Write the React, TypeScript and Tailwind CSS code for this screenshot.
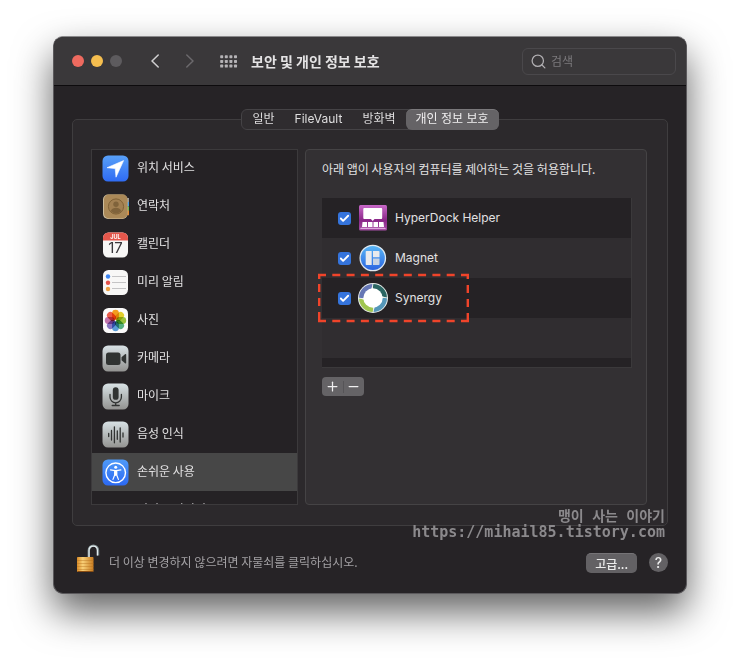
import type { ReactNode } from "react";
import { Check, Minus, Plus, Search } from "lucide-react";

const TABS = ["일반", "FileVault", "방화벽", "개인 정보 보호"];

const PETALS = [
  { angle: 0, color: "#f7a01f" },
  { angle: 45, color: "#e6d22c" },
  { angle: 90, color: "#9dc63f" },
  { angle: 135, color: "#57b384" },
  { angle: 180, color: "#5b9fdc" },
  { angle: 225, color: "#8a78c4" },
  { angle: 270, color: "#c476b0" },
  { angle: 315, color: "#ee5f4c" },
];

const GRID_DOTS = [0, 1, 2].flatMap((row) =>
  [0, 1, 2, 3].map((col) => ({ x: col * 4.6 + 0.2, y: row * 4.7 + 0.2 })),
);

function Tile({ from, to, children }: { from: string; to: string; children: ReactNode }) {
  const id = `tile-${from.slice(1)}-${to.slice(1)}`;

  return (
    <svg viewBox="0 0 27 27" className="size-[27px] shrink-0" aria-hidden="true">
      <defs>
        <linearGradient id={id} x1="0" y1="0" x2="0" y2="1">
          <stop offset="0" stopColor={from} />
          <stop offset="1" stopColor={to} />
        </linearGradient>
      </defs>
      <rect x="0.5" y="0.5" width="26" height="26" rx="5.5" fill={`url(#${id})`} />
      {children}
    </svg>
  );
}

function LocationIcon() {
  return (
    <Tile from="#58a0f8" to="#2f6bf3">
      <path d="M21.6 5.6 5 12.7l8.2.9.8 8.6z" fill="#fff" stroke="#fff" strokeWidth="0.6" strokeLinejoin="round" />
    </Tile>
  );
}

function ContactsIcon() {
  return (
    <svg viewBox="0 0 27 27" className="size-[27px] shrink-0" aria-hidden="true">
      <rect x="23" y="5" width="4.6" height="4.6" rx="1" fill="#9b9b9b" />
      <rect x="23" y="9" width="4.6" height="4.6" rx="1" fill="#4c9fe0" />
      <rect x="23" y="13.4" width="4.6" height="4.6" rx="1" fill="#6fbb52" />
      <rect x="23" y="17.6" width="4.6" height="4.6" rx="1" fill="#e58a35" />
      <rect x="1" y="1.5" width="24.5" height="24.5" rx="5" fill="#cdbd9d" />
      <rect x="2" y="1.5" width="23.5" height="24" rx="5" fill="#ab8958" />
      <circle cx="14" cy="13.5" r="7.6" fill="#a28052" stroke="#806237" strokeWidth="1" />
      <circle cx="14" cy="11.2" r="2.7" fill="#80633b" />
      <path d="M8.8 18c.8-2.5 3-3.3 5.2-3.3s4.4.8 5.2 3.3c-2.8 3.2-7.6 3.2-10.4 0z" fill="#80633b" />
    </svg>
  );
}

function CalendarIcon() {
  return (
    <svg viewBox="0 0 27 27" className="size-[27px] shrink-0" aria-hidden="true">
      <rect x="1" y="1.5" width="25" height="25" rx="5.5" fill="#f7f6f5" />
      <path d="M1 9.5V7A5.500 5.500 0 0 1 6.500 1.500h14A5.500 5.500 0 0 1 26 7v2.500z" fill="#e5574c" />
      <text x="13.5" y="7.8" textAnchor="middle" fontSize="5.5" fontWeight="700" fill="#fff" fontFamily="Inter, sans-serif">
        JUL
      </text>
      <text x="13.5" y="22.3" textAnchor="middle" fontSize="15" fill="#38363a" fontFamily="Inter, sans-serif">
        17
      </text>
    </svg>
  );
}

function RemindersIcon() {
  return (
    <svg viewBox="0 0 27 27" className="size-[27px] shrink-0" aria-hidden="true">
      <rect x="1" y="1" width="25" height="25" rx="5.5" fill="#f8f7f6" />
      <circle cx="6" cy="7.5" r="2.2" fill="#3c83ef" />
      <circle cx="6" cy="13.8" r="2.2" fill="#e4524a" />
      <circle cx="6" cy="20" r="2.2" fill="#eda043" />
      <path d="M10 7.5h14M10 13.5h14M10 19.5h14" stroke="#c5c4c5" strokeWidth="1" />
    </svg>
  );
}

function PhotosIcon() {
  return (
    <svg viewBox="0 0 27 27" className="size-[27px] shrink-0" aria-hidden="true">
      <rect x="1" y="1" width="25" height="25" rx="5.5" fill="#fbfafa" />
      {PETALS.map((petal) => (
        <rect
          key={petal.angle}
          x="10.1"
          y="2.8"
          width="6.8"
          height="10"
          rx="3.4"
          fill={petal.color}
          className="mix-blend-multiply"
          transform={`rotate(${petal.angle} 13.5 13.5)`}
        />
      ))}
    </svg>
  );
}

function CameraIcon() {
  return (
    <Tile from="#d9e2e6" to="#929290">
      <rect x="4" y="7.5" width="14.5" height="12.5" rx="2.5" fill="#303332" />
      <path d="M19.500 12.300 23 9.200c.6-.5 1.200-.2 1.200.5v8.100c0 .7-.6 1-1.200.5l-3.500-3.100z" fill="#303332" />
    </Tile>
  );
}

function MicIcon() {
  return (
    <Tile from="#d8e2e5" to="#939391">
      <rect x="10.8" y="4.2" width="5.800" height="12.6" rx="2.9" fill="#303332" />
      <path
        d="M8 11.500v2.600a5.700 5.700 0 0 0 11.400 0v-2.600M13.700 19.800v2.700M10.200 22.500h7"
        fill="none"
        stroke="#303332"
        strokeWidth="1.3"
        strokeLinecap="round"
      />
    </Tile>
  );
}

function SpeechIcon() {
  return (
    <Tile from="#d7e1e4" to="#949492">
      <path
        d="M6.700 12.500v3M9.500 9.500v9.500M12.400 5.800v16M15.300 9.800v8.500M18.200 7v14M21 12v4"
        stroke="#303332"
        strokeWidth="1.3"
        strokeLinecap="round"
      />
    </Tile>
  );
}

function AccessibilityIcon() {
  return (
    <Tile from="#4f9af8" to="#2c69f3">
      <circle cx="13.7" cy="13.8" r="9.8" fill="none" stroke="#fff" strokeWidth="1.4" />
      <circle cx="13.7" cy="8.3" r="1.5" fill="#fff" />
      <path
        d="M8.500 10.900c2.500.6 3.800.8 5.200.8s2.700-.2 5.200-.8M12.700 12v4l-1.700 4.400M14.700 12v4l1.700 4.400"
        fill="none"
        stroke="#fff"
        strokeWidth="1.2"
        strokeLinecap="round"
      />
      <path d="M12.300 11.500h2.800v4.500l-1.400 1-1.400-1z" fill="#fff" />
    </Tile>
  );
}

function HyperDockIcon() {
  return (
    <svg viewBox="0 0 30 30" className="size-[30px] shrink-0" aria-hidden="true">
      <defs>
        <linearGradient id="hyperdock" x1="0" y1="0" x2="0" y2="1">
          <stop offset="0" stopColor="#c869c8" />
          <stop offset="0.6" stopColor="#8a2688" />
          <stop offset="1" stopColor="#a74fa6" />
        </linearGradient>
      </defs>
      <rect x="1" y="2" width="28" height="25.5" rx="1.5" fill="url(#hyperdock)" />
      <path d="M6.500 5h16.500c.8 0 1.200.5 1.200 1.200v8.600c0 .8-.4 1.200-1.200 1.200h-6.500l-1.800 2-1.800-2H6.500c-.8 0-1.200-.4-1.200-1.200V6.200c0-.7.4-1.200 1.200-1.200z" fill="#fff" />
      <path d="M4.500 19H9v5H4zM10 19h4.500v5H10zM15.500 19H20v5h-4.500zM21 19h4.500l.5 5h-5z" fill="#fff" />
      <path d="M2 26h26l-1-1.200H3z" fill="#dda9dc" />
    </svg>
  );
}

function MagnetIcon() {
  return (
    <svg viewBox="0 0 30 30" className="size-[30px] shrink-0" aria-hidden="true">
      <defs>
        <linearGradient id="magnet" x1="0" y1="0" x2="0" y2="1">
          <stop offset="0" stopColor="#5ab8f6" />
          <stop offset="1" stopColor="#2962e0" />
        </linearGradient>
      </defs>
      <circle cx="14.8" cy="15" r="12.7" fill="url(#magnet)" stroke="#dfe8ef" strokeWidth="1.3" />
      <path d="M8.500 8h5.200v14H8.500a.8.8 0 0 1-.8-.8V8.800a.8.8 0 0 1 .8-.8z" fill="#e8eaed" />
      <path d="M15 8h5.700a.8.8 0 0 1 .8.8V14.200H15z" fill="#e8eaed" />
      <path d="M15 15.500h6.500v5.700a.8.8 0 0 1-.8.8H15z" fill="#c7d3e3" />
    </svg>
  );
}

function SynergyIcon() {
  return (
    <svg viewBox="0 0 30 30" className="size-[30px] shrink-0" aria-hidden="true">
      <circle cx="15" cy="15" r="15" fill="#e9eeec" />
      <path d="M15 1a14 14 0 0 1 14 14l-4.500-1.500L15 15z" fill="#2b6663" />
      <path d="M29 15a14 14 0 0 1-14 14l1.500-4.500L15 15z" fill="#5597b9" />
      <path d="M15 29A14 14 0 0 1 1 15l4.500 1.500L15 15z" fill="#a0c651" />
      <path d="M1 15A14 14 0 0 1 15 1l-1.500 4.500L15 15z" fill="#6677b5" />
      <path d="M15 .5 14 6M29.500 15 24 14M15 29.500l1-5.500M.5 15 6 16" stroke="#e9eeec" strokeWidth="0.9" />
      <circle cx="15" cy="15" r="9.7" fill="#fff" />
    </svg>
  );
}

function LockIcon() {
  return (
    <svg viewBox="0 0 24 32" className="h-8 w-6 shrink-0" aria-hidden="true">
      <defs>
        <linearGradient id="lock" x1="0" y1="0" x2="1" y2="0">
          <stop offset="0" stopColor="#d98b27" />
          <stop offset="0.35" stopColor="#f8cf77" />
          <stop offset="1" stopColor="#c77b20" />
        </linearGradient>
      </defs>
      <path d="M12.800 15V7.500c0-6.500 9.200-6.500 9.200 0v5" fill="none" stroke="#7f8c8f" strokeWidth="2.4" />
      <path d="M13 15V7.500c0-5.800 8.400-5.800 8.400 0v5" fill="none" stroke="#e3ecee" strokeWidth="1.2" />
      <rect x="1" y="14" width="16.5" height="15" rx="0.8" fill="url(#lock)" />
      <path d="M1 17.500h16.500M1 20.500h16.500M1 23.500h16.500M1 26.500h16.500" stroke="#b46f1c" strokeOpacity="0.5" strokeWidth="0.8" />
      <path d="M1.500 28.500h15.500" stroke="#8a4d12" strokeWidth="1" />
    </svg>
  );
}

const CATEGORIES = [
  { label: "위치 서비스", icon: <LocationIcon /> },
  { label: "연락처", icon: <ContactsIcon /> },
  { label: "캘린더", icon: <CalendarIcon /> },
  { label: "미리 알림", icon: <RemindersIcon /> },
  { label: "사진", icon: <PhotosIcon /> },
  { label: "카메라", icon: <CameraIcon /> },
  { label: "마이크", icon: <MicIcon /> },
  { label: "음성 인식", icon: <SpeechIcon /> },
  { label: "손쉬운 사용", icon: <AccessibilityIcon />, selected: true },
  { label: "입력 모니터링", icon: null },
];

const APPS = [
  { name: "HyperDock Helper", icon: <HyperDockIcon /> },
  { name: "Magnet", icon: <MagnetIcon /> },
  { name: "Synergy", icon: <SynergyIcon /> },
];

function Toolbar() {
  return (
    <header className="flex h-[49px] items-center border-b border-[#0d0b0d] bg-[#3a383a] pr-[10px] pl-[18px]">
      <div className="flex gap-[7px]">
        <button aria-label="닫기" className="size-3 rounded-full bg-[#ee6a5f]" />
        <button aria-label="최소화" className="size-3 rounded-full bg-[#f5be4f]" />
        <button aria-label="확대/축소" disabled className="size-3 rounded-full bg-[#5d5b5e]" />
      </div>

      <nav className="ml-[21px] flex items-center gap-[11px]">
        <button aria-label="뒤로" className="flex w-6 justify-center text-[#d0cfd0]">
          <svg viewBox="0 0 8 14" className="h-[14px] w-2" fill="none" stroke="currentColor" strokeWidth="1.5" strokeLinecap="round" strokeLinejoin="round">
            <path d="M7.200 1 1 7l6.200 6" />
          </svg>
        </button>
        <button aria-label="앞으로" disabled className="flex w-6 justify-center text-[#6b696c]">
          <svg viewBox="0 0 8 14" className="h-[14px] w-2" fill="none" stroke="currentColor" strokeWidth="1.5" strokeLinecap="round" strokeLinejoin="round">
            <path d="M.8 1 7 7 .8 13" />
          </svg>
        </button>
      </nav>

      <button aria-label="모두 보기" className="ml-[18px]">
        <svg viewBox="0 0 18 13" className="h-[13px] w-[18px]">
          {GRID_DOTS.map((dot) => (
            <rect key={`${dot.x}-${dot.y}`} x={dot.x} y={dot.y} width="3" height="3" rx="0.7" fill="#b5b3b6" />
          ))}
        </svg>
      </button>

      <h1 className="mb-px ml-[13px] text-sm leading-5 font-bold text-[#e4e3e4]">보안 및 개인 정보 보호</h1>

      <label className="ml-auto flex h-[27px] w-[154px] items-center gap-1 rounded-md border border-[#4a484b] px-[7px]">
        <Search className="size-[17px] shrink-0 text-[#b0aeb1]" strokeWidth={1.8} aria-hidden="true" />
        <input
          type="search"
          aria-label="검색"
          placeholder="검색"
          className="w-full min-w-0 bg-transparent text-xs text-[#dddcdd] outline-none placeholder:text-[#7c7a7d]"
        />
      </label>
    </header>
  );
}

function Tabs() {
  return (
    <div
      role="tablist"
      className="relative z-10 mx-auto flex h-[21px] rounded-md border border-[#454346] bg-[#2f2c2f] font-[Inter,'Noto_Sans_CJK_KR',sans-serif]"
    >
      {TABS.map((tab, index) => {
        const selected = index === TABS.length - 1;

        return (
          <button
            key={tab}
            role="tab"
            aria-selected={selected}
            className={
              selected
                ? "-my-px -mr-px rounded-md border-t border-[#7a787b] bg-[#656366] px-[10px] pb-[2px] text-xs leading-4 text-[#f0eff0]"
                : "px-[10px] pb-[2px] text-xs leading-4 text-[#dfdedf]"
            }
          >
            {tab}
          </button>
        );
      })}
    </div>
  );
}

function Sidebar() {
  return (
    <ul className="h-[356px] w-[207px] shrink-0 overflow-hidden border-x border-b border-[#3c3a3c] bg-[#252225] shadow-[inset_0_1px_#3c3a3c]">
      {CATEGORIES.map((category) => (
        <li key={category.label}>
          <button
            aria-current={category.selected}
            className={
              category.selected
                ? "flex h-[38px] w-full items-center gap-2 bg-[#474747] pl-[10px] text-left"
                : "flex h-[38px] w-full items-center gap-2 pl-[10px] text-left"
            }
          >
            {category.icon ?? <span className="size-[27px] shrink-0" />}
            <span className="pb-[3px] text-xs text-[#e2e1e2]">{category.label}</span>
          </button>
        </li>
      ))}
    </ul>
  );
}

function Highlight() {
  return (
    <svg
      viewBox="0 0 152 50"
      className="pointer-events-none absolute top-[75px] -left-1 h-[50px] w-[152px]"
      fill="none"
      stroke="#f0442a"
      strokeWidth="2.4"
      aria-hidden="true"
    >
      <path d="M0 2h151" strokeDasharray="8 6.3" />
      <path d="M0 48h151" strokeDasharray="8 6.3" />
      <path d="M1.200 1v48" strokeDasharray="5 5 8 6 8 6 11 9" />
      <path d="M149.800 1v48" strokeDasharray="5 6 8 6 8 6 10 9" />
    </svg>
  );
}

function AppList() {
  return (
    <section className="min-w-0 flex-1 rounded-[4px] border border-[#454345] bg-[#333033] pt-[10px] pr-[14px] pl-4">
      <p className="text-xs leading-[18px] text-[#e2e1e2]">
        아래 앱이 사용자의 컴퓨터를 제어하는 것을 허용합니다.
      </p>

      <div className="relative mt-5">
        <ul className="border-r border-b border-[#3b393b] bg-[#252225]">
          {APPS.map((app) => (
            <li key={app.name} className="even:bg-[#302d30]">
              <label className="flex h-10 items-center gap-[7px] pl-4">
                <span className="relative size-[13px] shrink-0">
                  <input
                    type="checkbox"
                    defaultChecked
                    className="peer block size-[13px] appearance-none rounded-[3px] bg-[#59575a] checked:bg-[#3574dc]"
                  />
                  <Check
                    className="pointer-events-none absolute inset-0 hidden size-[13px] p-px text-white peer-checked:block"
                    strokeWidth={4}
                    aria-hidden="true"
                  />
                </span>
                {app.icon}
                <span className="font-[Inter,sans-serif] text-xs text-[#e2e1e2]">{app.name}</span>
              </label>
            </li>
          ))}
          <li className="h-10 bg-[#302d30]" />
          <li className="h-[9px]" />
        </ul>
        <Highlight />
      </div>

      <div className="mt-[9px] flex h-[19px] w-[42px] items-center rounded-[4px] bg-[#656366] text-[#f0eff0]">
        <button aria-label="추가" className="flex flex-1 justify-center">
          <Plus className="size-[15px]" strokeWidth={2} />
        </button>
        <span className="h-3 w-px bg-[#565457]" />
        <button aria-label="제거" className="flex flex-1 justify-center">
          <Minus className="size-[15px]" strokeWidth={2} />
        </button>
      </div>
    </section>
  );
}

export default function App() {
  return (
    <div className="min-h-screen bg-white px-[53px] pt-9 pb-[70px] font-['Noto_Sans_CJK_KR',sans-serif]">
      <main className="overflow-hidden rounded-[10px] border border-[#5b595c] border-t-[#8a898b] bg-[#262326] shadow-[0_18px_38px_rgba(0,0,0,0.62)]">
        <Toolbar />

        <div className="relative flex flex-col px-[18px] pt-[23px] pb-[18px]">
          <Tabs />

          <div className="-mt-[11px] flex gap-[7px] rounded-[5px] border border-[#3f3d3f] bg-[#2c292c] pt-[29px] pr-5 pb-5 pl-[18px]">
            <Sidebar />
            <AppList />
          </div>

          <div className="pointer-events-none absolute top-[422px] right-[21px] text-right font-['DejaVu_Sans_Mono','Noto_Sans_CJK_KR',monospace] leading-4 font-bold text-[#8b898c]">
            <p className="text-sm leading-4">맹이 사는 이야기</p>
            <p className="text-[15px] leading-4">https://mihail85.tistory.com</p>
          </div>

          <footer className="mt-[17px] flex items-start">
            <button aria-label="잠금" className="ml-1">
              <LockIcon />
            </button>
            <p className="mt-[11px] ml-[9px] text-xs leading-4 text-[#a3a1a4]">
              더 이상 변경하지 않으려면 자물쇠를 클릭하십시오.
            </p>
            <button className="mt-[10px] ml-auto h-5 rounded-[5px] border-t border-[#757376] bg-[#636164] px-[9px] text-xs leading-[18px] font-medium text-[#ececec]">
              고급...
            </button>
            <button
              aria-label="도움말"
              className="mt-[10px] ml-3 size-[19px] rounded-full bg-[#636164] font-[Inter,sans-serif] text-sm leading-[19px] font-medium text-[#ececec]"
            >
              ?
            </button>
          </footer>
        </div>
      </main>
    </div>
  );
}
